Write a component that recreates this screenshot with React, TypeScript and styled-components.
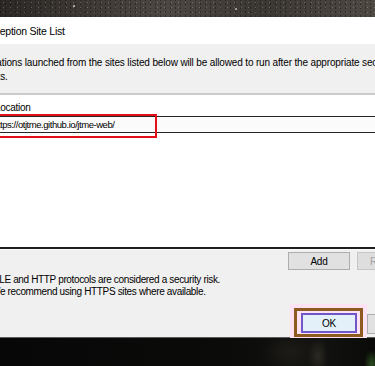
import React from "react";
import styled, { createGlobalStyle } from "styled-components";

const GlobalStyle = createGlobalStyle`
  html, body {
    margin: 0;
    padding: 0;
    width: 375px;
    height: 366px;
    overflow: hidden;
    background: #050505;
  }
  body {
    font-family: "Liberation Sans", Arial, sans-serif;
    color: #000;
  }
`;

const Screen = styled.div`
  display: flex;
  flex-direction: column;
  width: 375px;
  height: 366px;
  overflow: hidden;
`;

// the desktop wallpaper showing above and below the dialog
const Wallpaper = styled.div<{ $bottom?: boolean }>`
  position: relative;
  flex: ${(p) => (p.$bottom ? "1" : "0 0 17px")};
  background: ${(p) =>
    p.$bottom
      ? `radial-gradient(ellipse 8px 14px at 372px 26px, rgba(70, 130, 50, 0.55), transparent),
         radial-gradient(ellipse 10px 18px at 318px 18px, rgba(60, 56, 44, 0.6), transparent),
         radial-gradient(ellipse 30px 20px at 290px 14px, rgba(34, 32, 26, 0.7), transparent),
         linear-gradient(90deg, #070707 0%, #0b0b0a 60%, #121210 85%, #0a0a09 100%)`
      : `radial-gradient(circle at 74px 6px, rgba(220, 210, 190, 0.7) 0 0.8px, transparent 1.2px),
         radial-gradient(circle at 236px 9px, rgba(230, 220, 200, 0.6) 0 0.8px, transparent 1.3px),
         radial-gradient(circle 1px, rgba(200, 190, 175, 0.35) 0 0.6px, transparent 1px) 0 0 / 7px 5px,
         radial-gradient(circle 1px, rgba(15, 12, 10, 0.45) 0 0.7px, transparent 1.1px) 3px 2px / 5px 4px,
         linear-gradient(90deg, #2c2825 0%, #3f3a36 25%, #4d4743 45%, #3b3733 70%, #4f4944 100%)`};
`;

const Dialog = styled.div`
  display: flex;
  flex-direction: column;
  margin-left: -40px;
  width: 475px;
  background: #f0f0f0;
  border-bottom: 1px solid #5c5c5c;
`;

const TitleBar = styled.div`
  display: flex;
  align-items: center;
  height: 27px;
  padding-left: 23px;
  background: #fff;
`;

const Title = styled.span`
  font-size: 10.5px;
  letter-spacing: -0.25px;
  color: #000;
`;

const Body = styled.div`
  display: flex;
  flex-direction: column;
  padding: 12px 12px 0;
`;

const Description = styled.p`
  margin: 0 0 9px -2px;
  font-size: 10px;
  line-height: 14px;
  letter-spacing: -0.15px;
  white-space: nowrap;
`;

const ListBox = styled.div`
  display: flex;
  flex-direction: column;
  box-sizing: border-box;
  height: 156px;
  background: #fff;
  border-top: 2px solid #cbcbcb;
  border-left: 1px solid #828282;
  border-right: 1px solid #828282;
  border-bottom: 2px solid #1f1f1f;
  box-shadow: 0 1px 0 #fafafa;
`;

const HeaderRow = styled.div`
  padding: 6px 0 1px 22px;
  font-size: 10px;
  line-height: 14px;
  letter-spacing: -0.3px;
`;

const SiteRow = styled.div`
  position: relative;
  padding-left: 20px;
  background: #fbfbfb;
  border-top: 1px solid #262626;
  border-bottom: 1px solid #262626;
  font-size: 9.5px;
  line-height: 15px;
  letter-spacing: -0.45px;
  white-space: nowrap;
`;

// red annotation drawn over the entry
const Marker = styled.span`
  position: absolute;
  top: -3px;
  left: 14px;
  box-sizing: border-box;
  width: 170px;
  height: 24px;
  border: 2px solid #e3101a;
`;

const ListActions = styled.div`
  display: flex;
  justify-content: flex-end;
  gap: 7px;
  margin-top: 3px;
  padding-right: 4px;
`;

const Button = styled.button<{ $w: number; $h: number; $default?: boolean }>`
  box-sizing: border-box;
  width: ${(p) => p.$w}px;
  height: ${(p) => p.$h}px;
  padding: 0;
  font-family: "Liberation Sans", Arial, sans-serif;
  font-size: 10px;
  letter-spacing: -0.2px;
  color: #000;
  background: ${(p) => (p.$default ? "#e3eff9" : "#e1e1e1")};
  border: ${(p) => (p.$default ? "2px solid #6f57c9" : "1px solid #adadad")};

  &:disabled {
    color: #a3a3a3;
    background: #dedede;
    border-color: #c6c6c6;
  }
`;

const Footnote = styled.p`
  margin: 4px 0 0 19px;
  font-size: 10px;
  line-height: 12px;
  letter-spacing: -0.35px;
  white-space: nowrap;
`;

const Footer = styled.div`
  display: flex;
  justify-content: flex-end;
  align-items: flex-start;
  height: 39px;
  box-sizing: border-box;
  padding: 6px 12px 0 0;
`;

const Glow = styled.div`
  padding: 4px;
  background: #fce2f3;
`;

const FocusRing = styled.div`
  display: flex;
  padding: 2px 3px 1px 4px;
  border: 3px solid #8d5b1f;
  background: #fce2f3;
`;

const CancelSlot = styled.div`
  margin-top: 9px;
`;

export default function App() {
  return (
    <>
      <GlobalStyle />
      <Screen>
        <Wallpaper />
        <Dialog>
          <TitleBar>
            <Title>Exception Site List</Title>
          </TitleBar>
          <Body>
            <Description>
              Applications launched from the sites listed below will be allowed to run after the appropriate security
              <br />
              prompts.
            </Description>
            <ListBox>
              <HeaderRow>Location</HeaderRow>
              <SiteRow>
                https://otjtme.github.io/jtme-web/
                <Marker />
              </SiteRow>
            </ListBox>
            <ListActions>
              <Button $w={62} $h={18}>Add</Button>
              <Button $w={62} $h={18} disabled>Remove</Button>
            </ListActions>
            <Footnote>
              FILE and HTTP protocols are considered a security risk.
              <br />
              We recommend using HTTPS sites where available.
            </Footnote>
          </Body>
          <Footer>
            <Glow>
              <FocusRing>
                <Button $w={56} $h={20} $default>OK</Button>
              </FocusRing>
            </Glow>
            <CancelSlot>
              <Button $w={56} $h={20}>Cancel</Button>
            </CancelSlot>
          </Footer>
        </Dialog>
        <Wallpaper $bottom />
      </Screen>
    </>
  );
}
